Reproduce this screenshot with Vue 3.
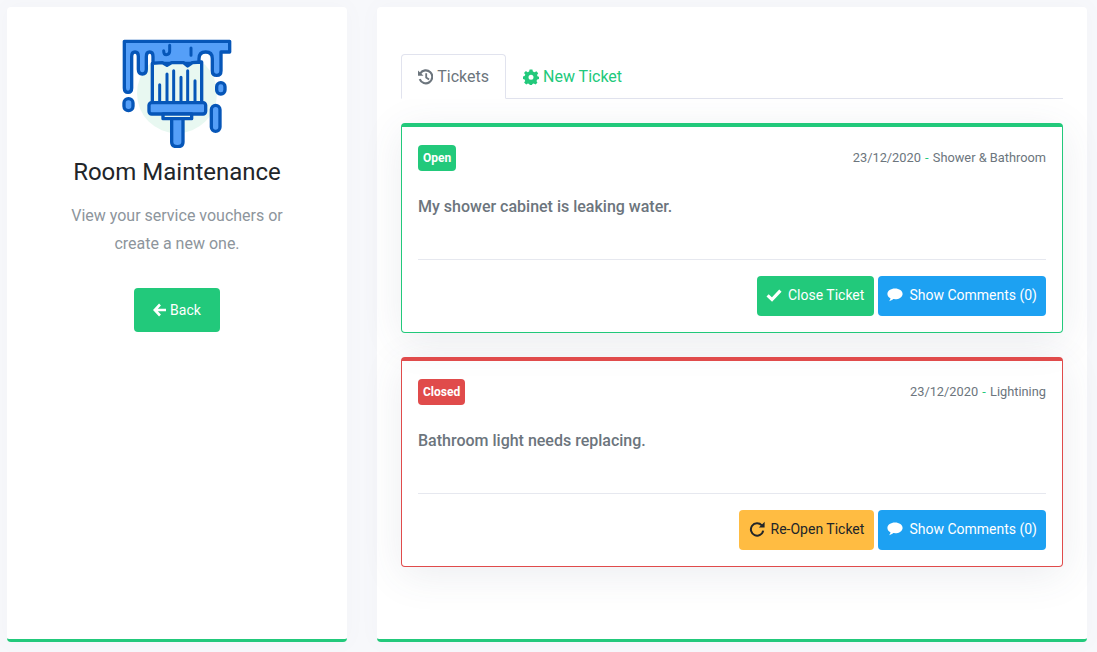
<template>
  <div class="page">
    <aside class="panel side">
      <svg class="logo" viewBox="50 24 360 330">
        <circle cx="230" cy="190" r="120" fill="#e8f8f1" />
        <path class="ln" fill="#559ff8" d="M72 34H388V66H362V122Q362 136 349 136Q336 136 336 122V86Q336 66 316 66Q296 66 296 86V100H158V80Q158 66 148 66Q138 66 138 80V118Q138 132 126 132Q114 132 114 118V80Q114 66 104 66Q94 66 94 80V174Q94 187 83 187Q72 187 72 174Z" />
        <path class="ln" fill="#e8f8f1" d="M156 100L186 98L200 106L214 98L250 98L262 108L276 98L304 96V218H156Z" />
        <path class="ln thin" d="M178 164V214M200 132V214M220 122V214M242 142V214M262 122V214M284 152V214" />
        <path class="ln thin" d="M208 46V64Q208 74 198 74Q190 74 190 62M272 54V76" />
        <rect class="ln" fill="#559ff8" x="146" y="218" width="170" height="34" rx="8" />
        <rect class="ln" fill="#e8f8f1" x="188" y="252" width="86" height="14" />
        <path class="ln" fill="#559ff8" d="M214 266H248V336Q248 350 231 350Q214 350 214 336Z" />
        <rect class="ln" fill="#559ff8" x="71" y="206" width="27" height="36" rx="13" />
        <rect class="ln" fill="#559ff8" x="349" y="158" width="25" height="34" rx="12" />
        <rect class="ln" fill="#559ff8" x="333" y="226" width="26" height="78" rx="13" />
      </svg>
      <h1 class="title">Room Maintenance</h1>
      <p class="lead">View your service vouchers or<br />create a new one.</p>
      <button class="btn btn-green back">
        <svg class="ic" viewBox="0 0 14 14"><path d="M7 1.5L1.8 7L7 12.5M2 7H13" fill="none" stroke="currentColor" stroke-width="2.6" /></svg>
        Back
      </button>
    </aside>

    <main class="panel content">
      <nav class="tabs">
        <div class="tab active">
          <svg class="tab-ic" viewBox="0 0 16 16">
            <path d="M2.4 4.2A6.8 6.8 0 1 1 1.8 10.2" fill="none" stroke="currentColor" stroke-width="2.2" />
            <path d="M0 1.2L5.8 6.6H0Z" fill="currentColor" />
            <path d="M8.6 4V8.6L11.6 10.6" fill="none" stroke="currentColor" stroke-width="1.9" />
          </svg>
          Tickets
        </div>
        <div class="tab">
          <svg class="tab-ic" viewBox="0 0 16 16">
            <path fill-rule="evenodd" fill="currentColor" d="M6.6 0.6H9.4L9.9 2.6L11.6 3.3L13.4 2.2L15.2 4.2L14 5.9L14.7 7.4L16 7.8V10L14.2 10.5L13.5 12L14.4 13.8L12.5 15.5L10.8 14.4L9.4 15L9 16H6.8L6.2 14.9L4.9 14.4L3.2 15.5L1.1 13.6L2.2 12L1.6 10.5L0 10V7.6L1.6 7L2.3 5.6L1 4L2.9 2.1L4.6 3.2L6.1 2.6ZM8 5.8A2.5 2.5 0 1 0 8 10.8A2.5 2.5 0 1 0 8 5.8Z" />
          </svg>
          New Ticket
        </div>
      </nav>

      <section v-for="t in tickets" :key="t.text" class="ticket" :class="t.open ? 'is-open' : 'is-closed'">
        <header class="ticket-head">
          <span class="badge">{{ t.open ? 'Open' : 'Closed' }}</span>
          <span class="meta">{{ t.date }} <i>-</i> {{ t.category }}</span>
        </header>
        <p class="ticket-text">{{ t.text }}</p>
        <footer class="ticket-foot">
          <button v-if="t.open" class="btn btn-green">
            <svg class="ic check" viewBox="0 0 16 14"><path d="M1.6 7.4L6 11.6L14.4 2.6" fill="none" stroke="currentColor" stroke-width="3.2" /></svg>
            Close Ticket
          </button>
          <button v-else class="btn btn-amber">
            <svg class="ic redo" viewBox="0 0 16 16">
              <path d="M12.8 4.4A6.2 6.2 0 1 0 14.2 9.6" fill="none" stroke="currentColor" stroke-width="2" />
              <path d="M15.6 0.8V6.6H9.8Z" fill="currentColor" />
            </svg>
            Re-Open Ticket
          </button>
          <button class="btn btn-blue">
            <svg class="ic comment" viewBox="0 0 16 14">
              <path fill="currentColor" d="M8 0.6C12.2 0.6 15.6 2.9 15.6 5.9C15.6 8.9 12.2 11.2 8 11.2C7.4 11.2 6.8 11.2 6.3 11.1C5.2 12.1 3.8 12.9 2 13.3C2.8 12.4 3.3 11.4 3.5 10.2C1.6 9.3 0.4 7.7 0.4 5.9C0.4 2.9 3.8 0.6 8 0.6Z" />
            </svg>
            Show Comments (0)
          </button>
        </footer>
      </section>
    </main>
  </div>
</template>

<script setup>
const tickets = [
  { open: true, date: '23/12/2020', category: 'Shower & Bathroom', text: 'My shower cabinet is leaking water.' },
  { open: false, date: '23/12/2020', category: 'Lightining', text: 'Bathroom light needs replacing.' }
]
</script>

<style>
html, body { margin: 0; background: #f7f8fb; }
</style>

<style scoped>
.page {
  display: grid;
  grid-template-columns: 340px 710px;
  gap: 30px;
  height: 652px;
  box-sizing: border-box;
  padding: 7px 10px 10px 7px;
  font-family: Roboto, "Liberation Sans", sans-serif;
  color: #6c757d;
  overflow: hidden;
}
.panel {
  background: #fff;
  border-bottom: 3px solid #22c97b;
  border-radius: 4px;
  box-sizing: border-box;
  box-shadow: 0 0 20px rgba(120, 130, 160, 0.04);
}

/* buttons */
.btn {
  display: inline-flex;
  align-items: center;
  height: 40px;
  padding: 0 10px 2px 9px;
  border: 0;
  border-radius: 4px;
  font: 400 14px Roboto, "Liberation Sans", sans-serif;
  color: #fff;
  cursor: pointer;
}
.btn-green { background: #22c97b; }
.btn-blue { background: #1da1f2; padding-right: 9px; }
.btn-amber { background: #ffbc42; color: #212529; padding-left: 10px; }
.ic { width: 14px; height: 14px; margin-right: 3px; }
.check { width: 16px; margin-right: 6px; }
.redo { width: 16px; height: 16px; margin-right: 6px; }
.comment { width: 16px; margin-right: 6px; }

/* left column */
.side {
  display: flex;
  flex-direction: column;
  align-items: center;
  padding-top: 31px;
}
.logo { width: 120px; height: 110px; display: block; }
.ln { stroke: #0656b8; stroke-width: 10; stroke-linejoin: round; stroke-linecap: round; }
.thin { fill: none; stroke-width: 9; }
.title {
  margin: 8px 0 0;
  font-size: 24px;
  line-height: 32px;
  font-weight: 400;
  color: #212529;
}
.lead {
  margin: 14px 0 0;
  font-size: 16px;
  line-height: 28px;
  color: #8d959c;
  text-align: center;
}
.back { margin-top: 30px; height: 44px; width: 86px; justify-content: center; padding: 0; }

/* right column */
.content { padding: 47px 24px 0; }
.tabs {
  display: flex;
  height: 45px;
  box-sizing: border-box;
  border-bottom: 1px solid #e1e3ee;
}
.tab {
  display: flex;
  align-items: center;
  height: 45px;
  box-sizing: border-box;
  padding: 0 16px;
  font-size: 16px;
  border: 1px solid transparent;
  border-radius: 4px 4px 0 0;
  color: #22c97b;
  white-space: nowrap;
}
.tab.active {
  color: #6c757d;
  background: #fff;
  border-color: #e1e3ee #e1e3ee #fff;
  width: 105px;
}
.tab-ic { width: 16px; height: 16px; margin-right: 4px; }

.ticket {
  height: 210px;
  box-sizing: border-box;
  margin-top: 24px;
  padding: 18px 16px 16px;
  border: 1px solid;
  border-top-width: 4px;
  border-radius: 4px;
  display: flex;
  flex-direction: column;
  box-shadow: 0 8px 40px rgba(70, 80, 110, 0.1);
}
.is-open { border-color: #22c97b; }
.is-closed { border-color: #e04b4b; }
.ticket-head { display: flex; justify-content: space-between; align-items: center; }
.badge {
  display: flex;
  align-items: center;
  height: 26px;
  padding: 0 5px;
  border-radius: 4px;
  font-size: 12px;
  font-weight: 700;
  color: #fff;
}
.is-open .badge { background: #22c97b; }
.is-closed .badge { background: #e04b4b; }
.meta { font-size: 12.8px; color: #6c757d; margin-bottom: 2px; }
.meta i { font-style: normal; color: #22c97b; margin: 0 1px; }
.ticket-text {
  margin: 24px 0 0;
  font-size: 16px;
  line-height: 24px;
  font-weight: 500;
  color: #6c757d;
  flex: 1;
}
.ticket-foot {
  display: flex;
  justify-content: flex-end;
  gap: 4px;
  padding-top: 16px;
  border-top: 1px solid #e6e8ef;
}
</style>
